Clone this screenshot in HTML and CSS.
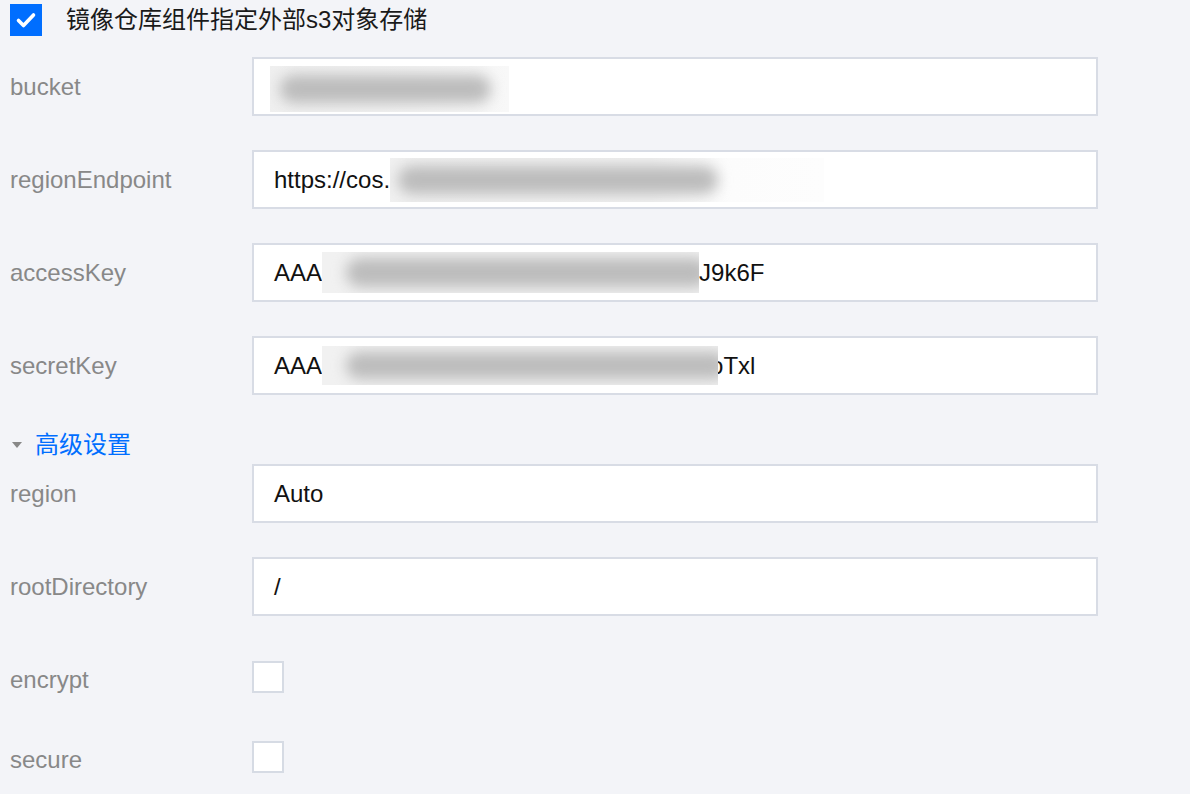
FILE: index.html
```html
<!DOCTYPE html>
<html lang="zh-CN">
<head>
<meta charset="utf-8">
<title>s3 storage</title>
<link rel="stylesheet" href="styles.css">
</head>
<body>
<div class="page">
  <div class="header">
    <span class="checkbox checked">
      <svg viewBox="0 0 32 32" width="32" height="32"><path d="M8.5 16.5 L13.5 21.5 L23.5 11" fill="none" stroke="#fff" stroke-width="3.6" stroke-linecap="round" stroke-linejoin="round"/></svg>
    </span>
    <span class="title">镜像仓库组件指定外部s3对象存储</span>
  </div>

  <div class="form">
    <div class="row">
      <div class="label">bucket</div>
      <div class="input">
        <span class="mask mask-bucket"><span class="blob"></span></span>
      </div>
    </div>
    <div class="row">
      <div class="label">regionEndpoint</div>
      <div class="input">
        <span class="txt">https://cos.</span>
        <span class="mask mask-endpoint"><span class="blob"></span></span>
      </div>
    </div>
    <div class="row">
      <div class="label">accessKey</div>
      <div class="input">
        <span class="txt">AAA</span>
        <span class="mask mask-access"><span class="blob"></span></span>
        <span class="txt">J9k6F</span>
      </div>
    </div>
    <div class="row">
      <div class="label">secretKey</div>
      <div class="input">
        <span class="txt">AAA</span>
        <span class="mask mask-secret"><span class="blob"></span></span>
        <span class="txt tail">oTxl</span>
      </div>
    </div>

    <div class="advanced">
      <span class="caret"></span>
      <span class="adv-text">高级设置</span>
    </div>

    <div class="row">
      <div class="label">region</div>
      <div class="input"><span class="txt">Auto</span></div>
    </div>
    <div class="row">
      <div class="label">rootDirectory</div>
      <div class="input"><span class="txt">/</span></div>
    </div>
    <div class="checks">
      <div class="row check-row">
        <div class="label">encrypt</div>
        <span class="checkbox"></span>
      </div>
      <div class="row check-row">
        <div class="label">secure</div>
        <span class="checkbox"></span>
      </div>
    </div>
  </div>
</div>
</body>
</html>
```

FILE: styles.css
```css
html, body {
  margin: 0;
  padding: 0;
  background: #f3f4f8;
}

body {
  font-family: "Liberation Sans", "Noto Sans CJK SC", sans-serif;
  font-size: 24px;
  color: #111;
  overflow: hidden;
}

.page {
  padding: 4px 0 0 10px;
}

.header {
  display: flex;
  align-items: center;
  height: 32px;
  gap: 24px;
}

.checkbox {
  display: block;
  flex: none;
  width: 32px;
  height: 32px;
  box-sizing: border-box;
  border: 2px solid #d6dbe4;
  background: #fff;
}

.checkbox.checked {
  border: none;
  background: #006eff;
}

.checkbox svg {
  display: block;
}

.title {
  font-family: "Liberation Sans", "Noto Sans CJK SC", sans-serif;
  font-size: 24px;
  line-height: 32px;
  color: #1a1a1a;
}

.form {
  margin-top: 21px;
}

.row {
  display: flex;
  align-items: center;
  height: 59px;
  margin-bottom: 34px;
}

.label {
  width: 242px;
  flex: none;
  color: #888;
  line-height: 28px;
}

.input {
  width: 846px;
  height: 59px;
  box-sizing: border-box;
  border: 2px solid #d8dce5;
  background: #fff;
  padding-left: 20px;
  display: flex;
  align-items: center;
  overflow: hidden;
}

.txt {
  white-space: pre;
  line-height: 28px;
  color: #111;
}

.tail {
  margin-left: -8px;
}

.mask {
  position: relative;
  z-index: 1;
  display: block;
  flex: none;
  overflow: hidden;
  background: #f5f5f5;
}

.blob {
  position: absolute;
  display: block;
  background: #bcbcbc;
  border-radius: 20px;
  filter: blur(7px);
}

.mask-bucket {
  width: 239px;
  height: 46px;
  margin-left: -4px;
  margin-top: 4px;
  background: linear-gradient(90deg, #efefef, #f3f3f3 60%, #f8f8f8);
}
.mask-bucket .blob {
  left: 10px;
  right: 18px;
  top: 9px;
  bottom: 9px;
}

.mask-endpoint {
  width: 434px;
  height: 44px;
  background: linear-gradient(90deg, #f0f0f0, #f2f2f2 60%, #fcfcfc 78%, #fdfdfd);
}
.mask-endpoint .blob {
  left: 8px;
  width: 320px;
  top: 8px;
  bottom: 8px;
}

.mask-access {
  width: 377px;
  height: 41px;
  background: #f1f1f1;
}
.mask-access .blob {
  left: 24px;
  right: -10px;
  top: 6px;
  bottom: 6px;
}

.mask-secret {
  width: 396px;
  height: 39px;
  background: #f1f1f1;
}
.mask-secret .blob {
  left: 24px;
  right: -10px;
  top: 6px;
  bottom: 6px;
}

.advanced {
  display: flex;
  align-items: center;
  height: 24px;
  margin-top: 38px;
  margin-bottom: 7px;
  padding-left: 2px;
}

.caret {
  display: block;
  width: 0;
  height: 0;
  border-left: 5px solid transparent;
  border-right: 5px solid transparent;
  border-top: 6px solid #888;
  margin-right: 13px;
}

.adv-text {
  color: #006eff;
  font-size: 24px;
  line-height: 24px;
}

.checks {
  padding-top: 11px;
}

.check-row {
  height: 32px;
  margin-bottom: 48px;
}

.check-row .label {
  padding-top: 6px;
}
```
